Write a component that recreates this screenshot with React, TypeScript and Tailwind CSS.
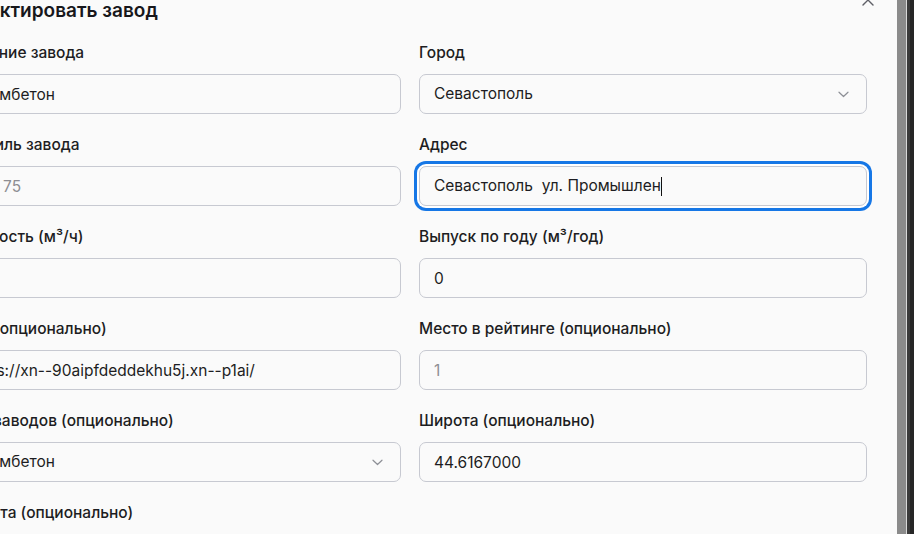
import React from 'react'

function Chevron() {
  return (
    <svg width="11" height="7" viewBox="0 0 11 7" fill="none" className="shrink-0">
      <path d="M1 1.2l4.5 4.3L10 1.2" stroke="#8d8f96" strokeWidth="1.2" strokeLinecap="round" strokeLinejoin="round" />
    </svg>
  )
}

const boxCls =
  'w-full h-[40px] rounded-[7px] border border-[#c7c9d1] bg-[#fafafa] px-[14px] text-[15.5px] text-[#1d1d22] outline-none placeholder:text-[#8e8e93]'

function Field({ label, children }: { label: string; children: React.ReactNode }) {
  return (
    <div className="flex flex-col">
      <label className="block whitespace-nowrap text-[15.5px] font-medium leading-5 text-[#1d1d22] mb-[11px]">
        {label}
      </label>
      {children}
    </div>
  )
}

function TextInput({ value, placeholder }: { value?: string; placeholder?: string }) {
  return <input readOnly className={boxCls} defaultValue={value} placeholder={placeholder} />
}

function SelectBox({ value }: { value: string }) {
  return (
    <div className={`${boxCls} flex items-center justify-between pr-[17px]`}>
      <span>{value}</span>
      <Chevron />
    </div>
  )
}

export default function App() {
  return (
    <div className="w-[914px] h-[534px] overflow-hidden flex bg-[#fafafa] [font-family:Inter,'Noto_Sans',sans-serif]">
      <div className="relative shrink-0 w-[974px] ml-[-77px] px-[30px] flex flex-col">
        <button className="absolute top-[-6px] right-[23px] text-[#5f6067]" aria-label="Закрыть">
          <svg width="12" height="12" viewBox="0 0 12 12" fill="none">
            <path d="M1 1l10 10M11 1L1 11" stroke="currentColor" strokeWidth="1.4" strokeLinecap="round" />
          </svg>
        </button>

        <h2 className="mt-[-3px] text-[19px] leading-7 font-semibold text-[#17171b] whitespace-nowrap">
          Редактировать завод
        </h2>

        <div className="mt-[18px] grid grid-cols-2 gap-x-[18px] gap-y-[21px]">
          <Field label="Название завода">
            <TextInput value="Крымбетон" />
          </Field>
          <Field label="Город">
            <SelectBox value="Севастополь" />
          </Field>

          <Field label="Профиль завода">
            <TextInput placeholder="max 75" />
          </Field>
          <Field label="Адрес">
            <div
              className={`${boxCls} flex items-center whitespace-pre shadow-[0_0_0_2px_#ffffff,0_0_0_5px_#1677e6]`}
            >
              <span>Севастополь  ул. Промышлен</span>
              <span className="inline-block w-px h-[19px] bg-[#111]" />
            </div>
          </Field>

          <Field label="Мощность (м³/ч)">
            <TextInput value="" />
          </Field>
          <Field label="Выпуск по году (м³/год)">
            <TextInput value="0" />
          </Field>

          <Field label="Сайт (опционально)">
            <TextInput value="https://xn--90aipfdeddekhu5j.xn--p1ai/" />
          </Field>
          <Field label="Место в рейтинге (опционально)">
            <TextInput placeholder="1" />
          </Field>

          <Field label="Сеть заводов (опционально)">
            <SelectBox value="Крымбетон" />
          </Field>
          <Field label="Широта (опционально)">
            <TextInput value="44.6167000" />
          </Field>

          <Field label="Долгота (опционально)">
            <TextInput value="33.5254000" />
          </Field>
        </div>
      </div>

      <div className="shrink-0 w-[9px] bg-[#8b8b8b]" />
      <div className="shrink-0 w-px bg-[#d9d9d9]" />
      <div className="shrink-0 w-[3px] bg-[#3b3b3b]" />
      <div className="shrink-0 w-[4px] bg-[#262626]" />
    </div>
  )
}
